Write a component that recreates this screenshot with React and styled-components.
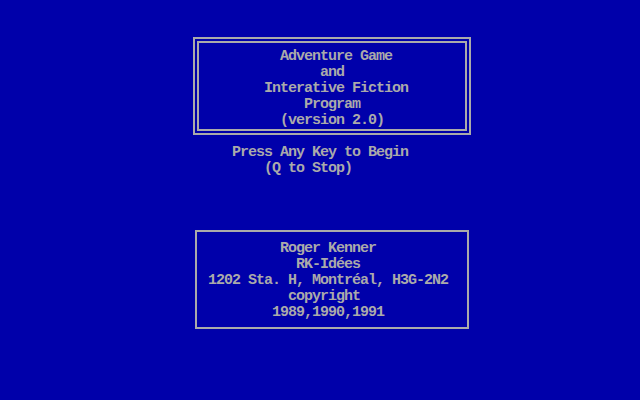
import React from "react";
import styled, { createGlobalStyle } from "styled-components";

const Global = createGlobalStyle`
  html, body { margin: 0; padding: 0; background: #0000aa; }
  #root { width: 640px; height: 400px; }
`;

const Screen = styled.div`
  width: 640px;
  height: 400px;
  background: #0000aa;
  color: #aaaaaa;
  font-family: "Liberation Mono", "DejaVu Sans Mono", monospace;
  font-size: 15px;
  font-weight: bold;
  letter-spacing: -1px;
  line-height: 16px;
  display: flex;
  flex-direction: column;
  align-items: flex-start;
  overflow: hidden;
  --origin: 0px;
`;

const TitleFrame = styled.div`
  box-sizing: border-box;
  margin: 37px 0 0 193px;
  width: 278px;
  height: 98px;
  border: 2px solid #aaaaaa;
  padding: 2px;
  display: flex;
`;

const TitleInner = styled.div`
  box-sizing: border-box;
  flex: 1;
  border: 2px solid #aaaaaa;
  padding: 6px 0 0;
  display: flex;
  flex-direction: column;
  --origin: 199px;
`;

const Prompt = styled.div`
  margin-top: 10px;
  display: flex;
  flex-direction: column;
`;

const CreditFrame = styled.div`
  box-sizing: border-box;
  margin: 53px 0 0 195px;
  width: 274px;
  height: 99px;
  border: 2px solid #aaaaaa;
  padding: 9px 0 6px;
  display: flex;
  flex-direction: column;
  --origin: 197px;
`;

const Line = styled.div`
  height: 16px;
  white-space: pre;
  padding-left: calc(${(p) => p.$col} * 8px - var(--origin));
`;

const title = [
  [35, "Adventure Game"],
  [40, "and"],
  [33, "Interative Fiction"],
  [38, "Program"],
  [35, "(version 2.0)"],
];

const credits = [
  [35, "Roger Kenner"],
  [37, "RK-Idées"],
  [26, "1202 Sta. H, Montréal, H3G-2N2"],
  [36, "copyright"],
  [34, "1989,1990,1991"],
];

export default function App() {
  return (
    <>
      <Global />
      <Screen>
        <TitleFrame>
          <TitleInner>
            {title.map(([c, t]) => (
              <Line key={t} $col={c}>{t}</Line>
            ))}
          </TitleInner>
        </TitleFrame>
        <Prompt>
          <Line $col={29}>Press Any Key to Begin</Line>
          <Line $col={33}>(Q to Stop)</Line>
        </Prompt>
        <CreditFrame>
          {credits.map(([c, t]) => (
            <Line key={t} $col={c}>{t}</Line>
          ))}
        </CreditFrame>
      </Screen>
    </>
  );
}
